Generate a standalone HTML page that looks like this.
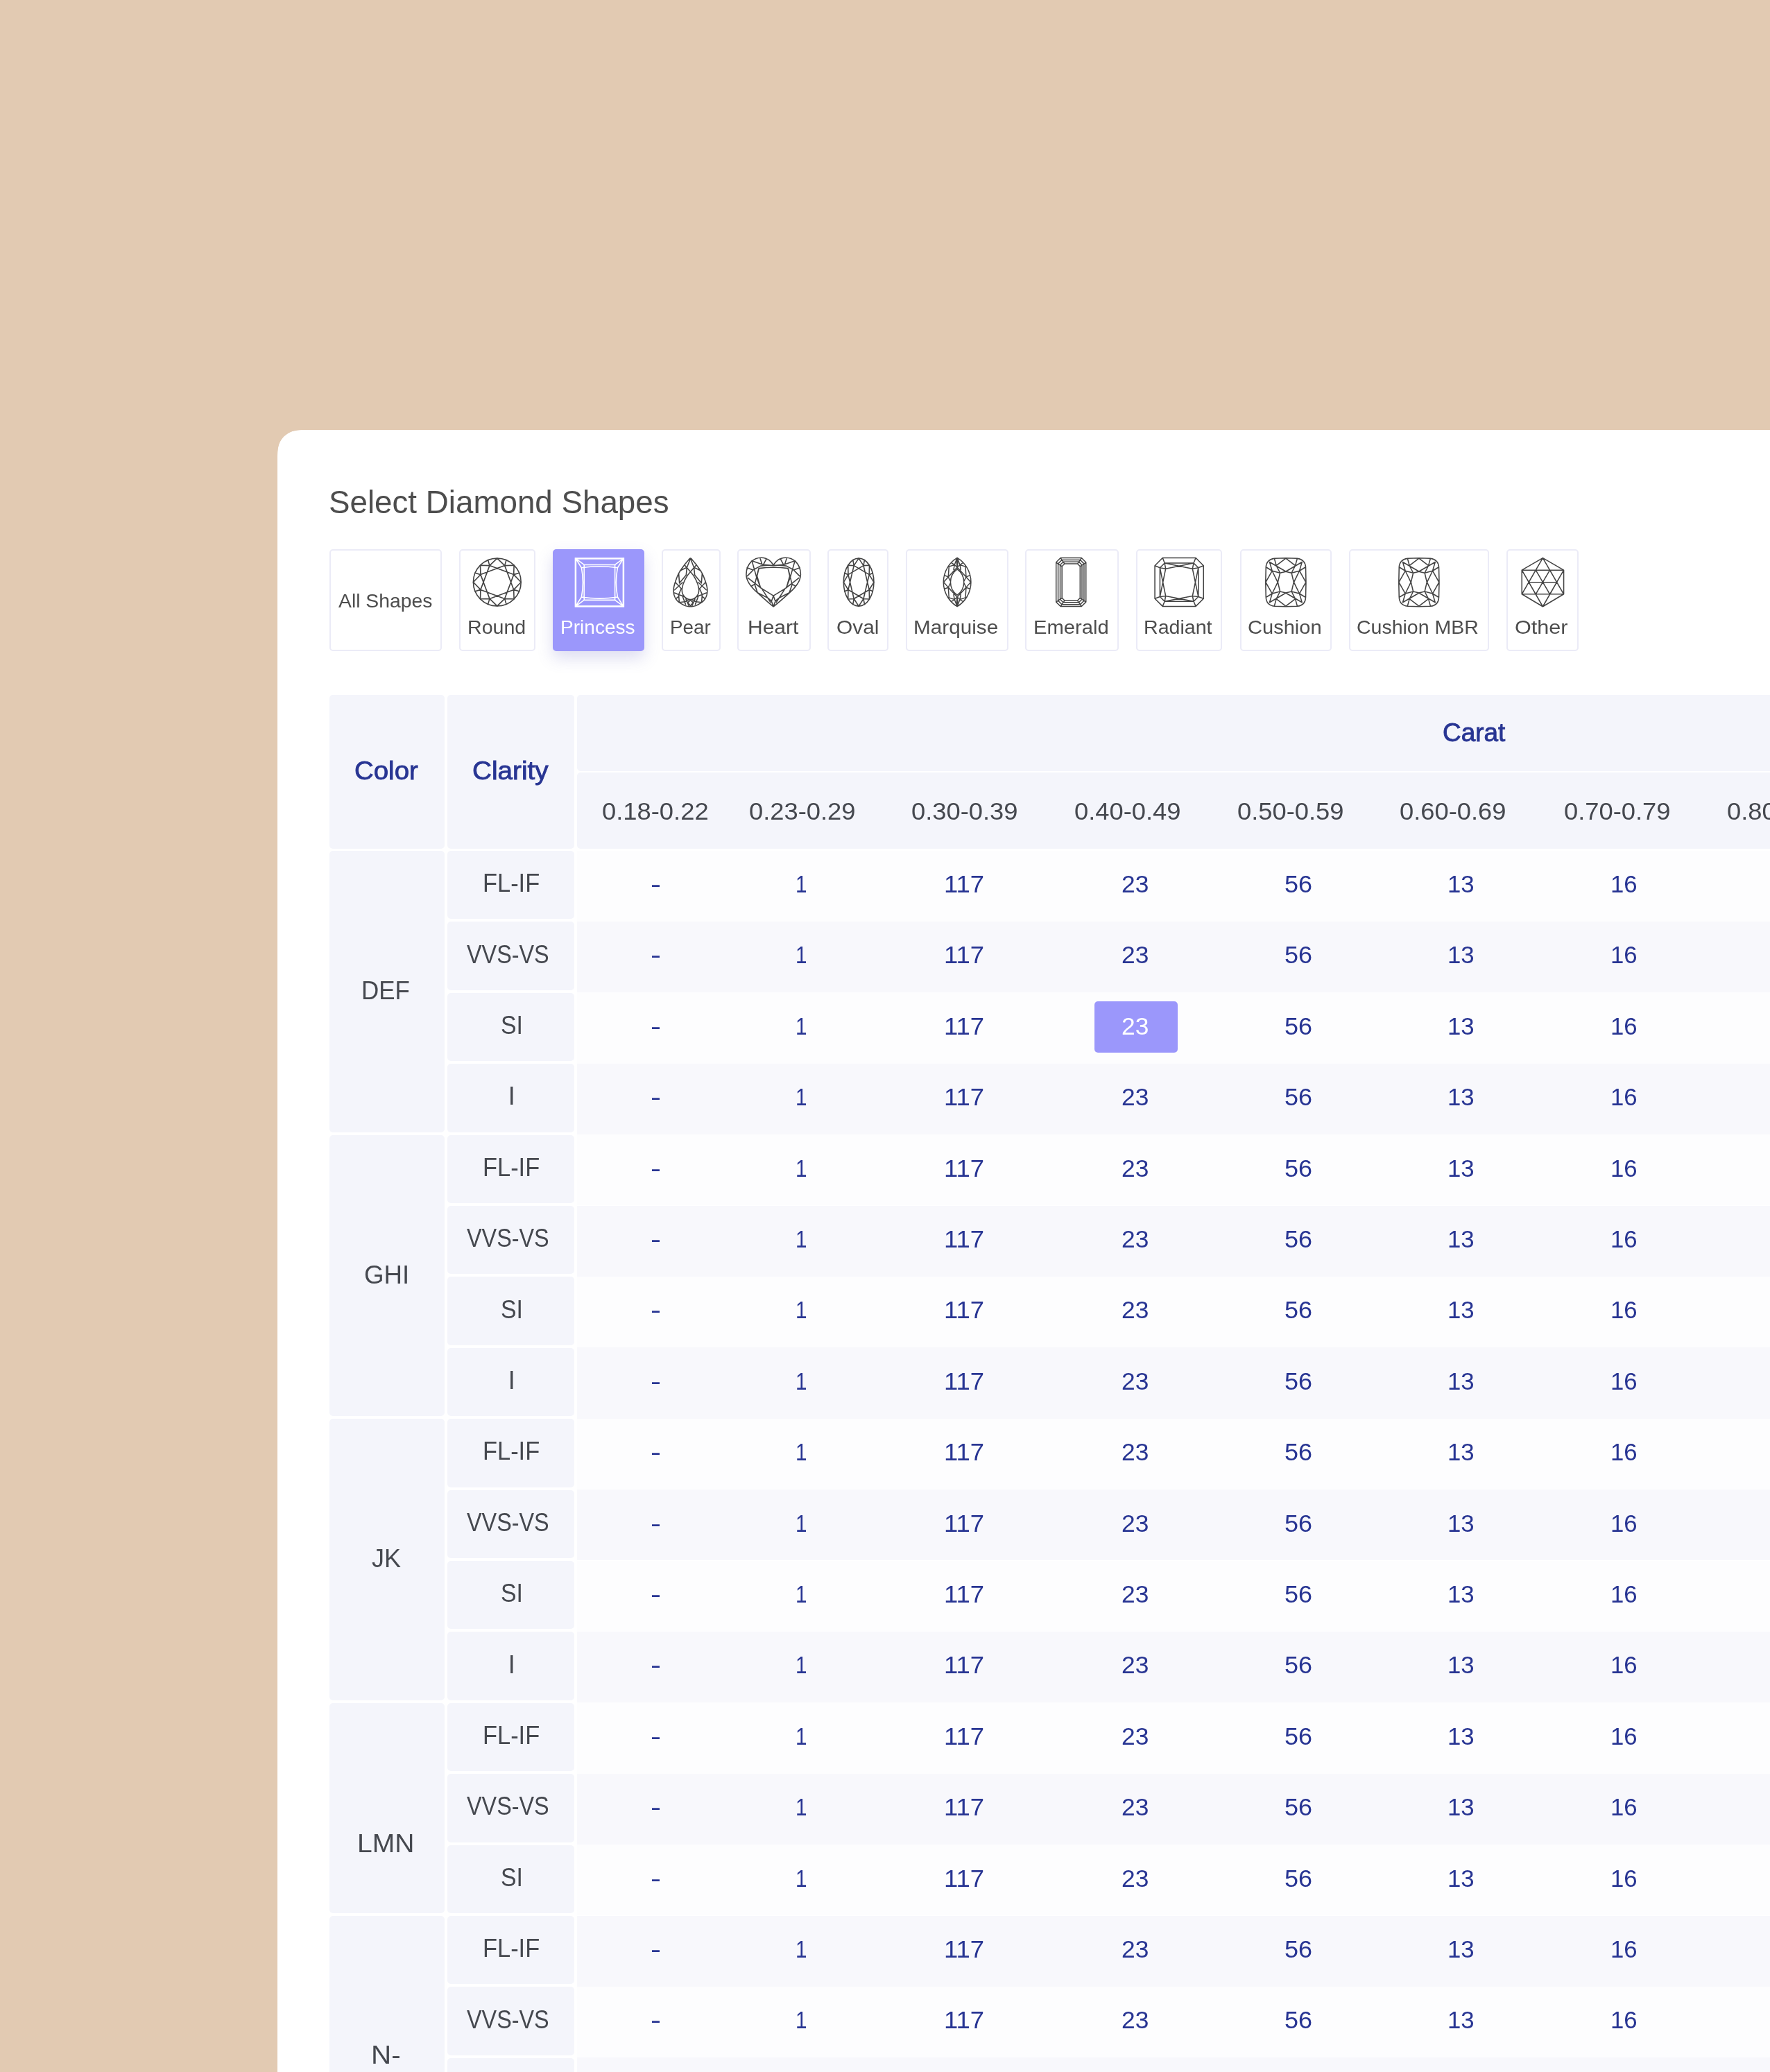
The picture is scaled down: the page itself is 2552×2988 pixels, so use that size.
<!DOCTYPE html>
<html lang="en">
<head>
<meta charset="utf-8">
<title>Select Diamond Shapes</title>
<style>
html,body{margin:0;padding:0}
body{width:2552px;height:2988px;overflow:hidden;position:relative;background:#e2cab2;font-family:"Liberation Sans",sans-serif}
.page{position:absolute;left:0;top:0;width:2552px;height:2988px;overflow:hidden;will-change:transform}
.card{position:absolute;left:400px;top:620px;width:2300px;height:2500px;background:#fff;border-top-left-radius:32px}
.t{position:absolute;display:block;margin:0;white-space:nowrap;line-height:1;font-weight:400;transform-origin:0 0}
.ttl{font-size:47px;color:#4d4d4d}
.lbl{font-size:27.5px;color:#4d4d4d}
.hb{font-size:36.5px;color:#283593;-webkit-text-stroke:.85px #283593}
.rng{font-size:35px;color:#45484f}
.k{font-size:36px;color:#45484f}
.v{font-size:35px;color:#283593}
.btn{position:absolute;box-sizing:border-box;border:2px solid #ebebf7;border-radius:5px;background:#fff}
.btn.sel{background:#9b97fb;border-color:#9b97fb;box-shadow:0 10px 22px rgba(100,100,190,.22)}
.btn.sel .lbl,.pick .v{color:#fff}
.ic{position:absolute;overflow:visible;fill:none;stroke:#444;stroke-linecap:round;stroke-linejoin:round}
.ic.w{stroke:#fff}
.c{position:absolute}
.h{background:#f4f5fb;border-radius:5px}
.row{background:#fdfdfe}
.row.alt{background:#f8f8fc}
.pick{position:absolute;display:block;background:#9b97fb;border-radius:5px}
</style>
</head>
<body>
<div class="page">
<main class="card" style="clip-path:path('M0,48.92C0,34.83 0,27.79 2.4,20.21C5.41,11.93 11.93,5.41 20.21,2.4L21.44,2.1C27.79,0 34.83,0 48.92,0L2300,0L2300,2500L0,2500Z')">
  <h2 class="t ttl" style="left:74.12px;top:79.61px;transform:scaleX(0.9728)">Select Diamond Shapes</h2>
  <div class="shapes" role="group" aria-label="Diamond shapes">
    <div class="btn" role="button" style="left:74.7px;top:172px;width:162.3px;height:147px;">
      <span class="t lbl" style="left:11.54px;top:59.22px;transform:scaleX(1.0304)">All Shapes</span>
    </div>
    <div class="btn" role="button" style="left:262.3px;top:172px;width:109.4px;height:147px;">
      <svg class="ic" style="left:-4.3px;top:-4px" width="120" height="100" viewBox="0 0 120 100" stroke-width="1.6" aria-hidden="true"><circle cx="56.8" cy="49.5" r="34.4"/><path d="M67.68,25.62L80.68,60.38M80.68,38.62L67.68,73.38M80.68,60.38L45.92,73.38M67.68,73.38L32.92,60.38M45.92,73.38L32.92,38.62M32.92,60.38L45.92,25.62M32.92,38.62L67.68,25.62M45.92,25.62L80.68,38.62M56.8,15.1L67.68,25.62M56.8,15.1L45.92,25.62M81.12,25.18L67.68,25.62M81.12,25.18L80.68,38.62M91.2,49.5L80.68,38.62M91.2,49.5L80.68,60.38M81.12,73.82L80.68,60.38M81.12,73.82L67.68,73.38M56.8,83.9L67.68,73.38M56.8,83.9L45.92,73.38M32.48,73.82L45.92,73.38M32.48,73.82L32.92,60.38M22.4,49.5L32.92,60.38M22.4,49.5L32.92,38.62M32.48,25.18L32.92,38.62M32.48,25.18L45.92,25.62M67.68,25.62L69.96,17.72M80.68,38.62L88.58,36.34M80.68,60.38L88.58,62.66M67.68,73.38L69.96,81.28M45.92,73.38L43.64,81.28M32.92,60.38L25.02,62.66M32.92,38.62L25.02,36.34M45.92,25.62L43.64,17.72"/></svg>
      <span class="t lbl" style="left:10.06px;top:97.02px;transform:scaleX(1.0390)">Round</span>
    </div>
    <div class="btn sel" role="button" aria-pressed="true" style="left:397.3px;top:172px;width:131.7px;height:147px;">
      <svg class="ic w" style="left:-9.3px;top:-9px" width="150" height="110" viewBox="0 0 150 110" stroke-width="1.6" aria-hidden="true"><path d="M52.18,29.44L96.62,29.44L96.62,80.36L52.18,80.36ZM48.39,33.79Q74.4,29.65 100.41,33.79Q96.27,54.9 100.41,76.01Q74.4,80.15 48.39,76.01Q52.53,54.9 48.39,33.79ZM39.9,20.4L52.18,29.44M39.9,20.4L48.39,33.79M108.9,20.4L96.62,29.44M108.9,20.4L100.41,33.79M108.9,89.4L96.62,80.36M108.9,89.4L100.41,76.01M39.9,89.4L52.18,80.36M39.9,89.4L48.39,76.01"/><rect x="39.9" y="20.4" width="69" height="69" stroke-width="2.5" stroke-linejoin="miter"/></svg>
      <span class="t lbl" style="left:9.1px;top:97.02px;transform:scaleX(1.0205)">Princess</span>
    </div>
    <div class="btn" role="button" style="left:554.3px;top:172px;width:84.3px;height:147px;">
      <svg class="ic" style="left:-6.3px;top:-4px" width="100" height="100" viewBox="0 0 1770 1770" stroke-width="28.32" aria-hidden="true"><path d="M805,268L793.51,270.97L782.22,279L770.94,290.75L759.44,304.89L747.53,320.08L735,335L721.64,350.24L707.59,367L693.12,384.81L678.52,403.22L664.05,421.77L650,440L636.26,457.99L622.59,476.11L609.06,494.38L595.74,512.78L582.7,531.32L570,550L557.56,568.76L545.3,587.59L533.31,606.56L521.7,625.74L510.57,645.2L500,665L490,685.43L480.48,706.48L471.44,727.81L462.85,749.07L454.71,769.92L447,790L439.79,809.32L433.11,828.15L426.88,846.56L421,864.63L415.4,882.42L410,900L404.7,917.42L399.56,934.63L394.69,951.56L390.22,968.15L386.28,984.32L383,1000L380.36,1014.8L378.26,1028.7L376.69,1042.19L375.63,1055.74L375.07,1069.85L375,1085L375.22,1101.28L375.7,1118.33L376.69,1135.94L378.41,1153.89L381.1,1171.98L385,1190L390.24,1208.45L396.67,1227.59L404.06,1246.88L412.22,1265.74L420.94,1283.63L430,1300L439.44,1314.73L449.44,1328.26L460,1340.81L471.11,1352.63L482.78,1363.95L495,1375L507.72,1385.62L520.93,1395.59L534.69,1405.06L549.07,1414.19L564.16,1423.11L580,1432L596.83,1441.11L614.63,1450.37L633.12,1459.44L652.04,1467.96L671.09,1475.6L690,1482L708.88,1487.27L727.96,1491.7L747.19,1495.25L766.48,1497.85L785.78,1499.45L805,1500L824.22,1499.45L843.52,1497.85L862.81,1495.25L882.04,1491.7L901.12,1487.27L920,1482L938.91,1475.6L957.96,1467.96L976.88,1459.44L995.37,1450.37L1013.17,1441.11L1030,1432L1045.84,1423.11L1060.93,1414.19L1075.31,1405.06L1089.07,1395.59L1102.28,1385.62L1115,1375L1127.22,1363.95L1138.89,1352.63L1150,1340.81L1160.56,1328.26L1170.56,1314.73L1180,1300L1189.06,1283.63L1197.78,1265.74L1205.94,1246.88L1213.33,1227.59L1219.76,1208.45L1225,1190L1228.9,1171.98L1231.59,1153.89L1233.31,1135.94L1234.3,1118.33L1234.78,1101.28L1235,1085L1234.93,1069.85L1234.37,1055.74L1233.31,1042.19L1231.74,1028.7L1229.64,1014.8L1227,1000L1223.72,984.32L1219.78,968.15L1215.31,951.56L1210.44,934.63L1205.3,917.42L1200,900L1194.6,882.42L1189,864.63L1183.12,846.56L1176.89,828.15L1170.21,809.32L1163,790L1155.29,769.92L1147.15,749.07L1138.56,727.81L1129.52,706.48L1120,685.43L1110,665L1099.43,645.2L1088.3,625.74L1076.69,606.56L1064.7,587.59L1052.44,568.76L1040,550L1027.3,531.32L1014.26,512.78L1000.94,494.38L987.41,476.11L973.74,457.99L960,440L945.95,421.77L931.48,403.22L916.88,384.81L902.41,367L888.36,350.24L875,335L862.47,320.08L850.56,304.89L839.06,290.75L827.78,279L816.49,270.97ZM805,610C720,700 610,880 590,1050C575,1200 680,1320 805,1320C930,1320 1035,1200 1020,1050C1000,880 890,700 805,610ZM805,275L715,500L695,700M805,275L895,500L915,700M650,432L805,610M960,432L805,610M540,585L715,500M1070,585L895,500M505,650L525,900M1105,650L1085,900M525,900L700,690M1085,900L910,690M420,880L570,1040M1190,880L1040,1040M600,885L400,1075M1010,885L1210,1075M400,1150L520,1200L640,1245M1210,1150L1090,1200L970,1245M570,1040L505,1195M1040,1040L1105,1195M505,1195L520,1395M1105,1195L1090,1395M440,1295L505,1240M1170,1295L1105,1240M600,1225L680,1440M1010,1225L930,1440M520,1395L660,1375L745,1345M1090,1395L950,1375L865,1345M690,1310L760,1470M920,1310L850,1470M805,1335L735,1400L805,1480M805,1335L875,1400L805,1480"/></svg>
      <span class="t lbl" style="left:9.72px;top:97.02px;transform:scaleX(1.0111)">Pear</span>
    </div>
    <div class="btn" role="button" style="left:663.3px;top:172px;width:105.4px;height:147px;">
      <svg class="ic" style="left:-5.3px;top:-4px" width="120" height="100" viewBox="0 0 1770 1475" stroke-width="23.6" aria-hidden="true"><path d="M813,365C760,290 700,215 560,210C400,205 240,330 235,560C232,680 330,830 480,960C600,1070 720,1180 813,1250C906,1180 1030,1070 1150,960C1300,830 1395,680 1392,560C1388,330 1230,205 1070,210C930,215 866,290 813,365ZM505,437Q813,395 1122,437L1160,600L1090,850L813,1020L540,850L465,600ZM380,472L540,385Q813,352 1088,385L1248,472M355,275L600,360M1271,275L1026,360M355,275L450,610L540,850M1271,275L1176,610L1086,850M500,440L415,780L475,955M1126,440L1211,780L1151,955M530,222L570,345M1096,222L1056,345M660,240L600,355M966,240L1026,355M600,360L813,378M1026,360L813,378M252,425L380,472M1374,425L1246,472M258,600L380,475M1368,600L1246,475M270,640L540,848M1356,640L1086,848M350,812L415,775M1276,812L1211,775M475,955L700,1070L772,1135M1151,955L926,1070L854,1135M560,862L752,1160M1066,862L874,1160M813,1020L772,1135L813,1250M813,1020L854,1135L813,1250"/></svg>
      <span class="t lbl" style="left:12.24px;top:97.02px;transform:scaleX(1.0912)">Heart</span>
    </div>
    <div class="btn" role="button" style="left:793.3px;top:172px;width:87.7px;height:147px;">
      <svg class="ic" style="left:-5.3px;top:-4px" width="100" height="100" viewBox="0 0 100 100" stroke-width="1.6" aria-hidden="true"><ellipse cx="48.1" cy="49.6" rx="21.8" ry="34.5"/><path d="M55,25.65L63.24,60.52M63.24,38.68L55,73.55M63.24,60.52L41.2,73.55M55,73.55L32.96,60.52M41.2,73.55L32.96,38.68M32.96,60.52L41.2,25.65M32.96,38.68L55,25.65M41.2,25.65L63.24,38.68M48.1,15.1L55,25.65M48.1,15.1L41.2,25.65M63.51,25.2L55,25.65M63.51,25.2L63.24,38.68M69.9,49.6L63.24,38.68M69.9,49.6L63.24,60.52M63.51,74L63.24,60.52M63.51,74L55,73.55M48.1,84.1L55,73.55M48.1,84.1L41.2,73.55M32.69,74L41.2,73.55M32.69,74L32.96,60.52M26.3,49.6L32.96,60.52M26.3,49.6L32.96,38.68M32.69,25.2L32.96,38.68M32.69,25.2L41.2,25.65M55,25.65L56.44,17.73M63.24,38.68L68.24,36.4M63.24,60.52L68.24,62.8M55,73.55L56.44,81.47M41.2,73.55L39.76,81.47M32.96,60.52L27.96,62.8M32.96,38.68L27.96,36.4M41.2,25.65L39.76,17.73"/></svg>
      <span class="t lbl" style="left:10.28px;top:97.02px;transform:scaleX(1.0860)">Oval</span>
    </div>
    <div class="btn" role="button" style="left:905.7px;top:172px;width:148px;height:147px;">
      <svg class="ic" style="left:42.3px;top:1px" width="60" height="90" viewBox="0 0 1381 2072" stroke-width="34.53" aria-hidden="true"><path d="M693,215A947,947 0 0 1 693,1835A947,947 0 0 1 693,215ZM693,595A527,527 0 0 1 693,1455A527,527 0 0 1 693,595ZM693,222L603,450L575,610M693,1828L603,1600L575,1440M693,222L783,450L811,610M693,1828L783,1600L811,1440M420,510L603,450M420,1540L603,1600M966,510L783,450M966,1540L783,1600M420,510L397,850M420,1540L397,1200M966,510L989,850M966,1540L989,1200M244,1025L397,850L693,531L783,450L887,377M244,1025L397,1200L693,1519L783,1600L887,1673M1142,1025L989,850L693,531L603,450L499,377M1142,1025L989,1200L693,1519L603,1600L499,1673M397,850L270,800M397,1200L270,1250M989,850L1116,800M989,1200L1116,1250M693,222L677,388L693,520M693,1828L677,1662L693,1530M693,222L709,388L693,520M693,1828L709,1662L693,1530M397,850L462,985M397,1200L462,1065M989,850L924,985M989,1200L924,1065"/></svg>
      <span class="t lbl" style="left:9.16px;top:97.02px;transform:scaleX(1.0800)">Marquise</span>
    </div>
    <div class="btn" role="button" style="left:1078px;top:172px;width:134.7px;height:147px;">
      <svg class="ic" style="left:0px;top:-4px" width="120" height="100" viewBox="0 0 1770 1475" stroke-width="22.12" aria-hidden="true"><path d="M725,215L1170,215L1265,310L1265,1152L1170,1247L725,1247L630,1152L630,310ZM752,257L1143,257L1223,337L1223,1125L1143,1205L752,1205L672,1125L672,337ZM781,300L1114,300L1180,366L1180,1096L1114,1162L781,1162L715,1096L715,366ZM810,340L1085,340L1140,395L1140,1067L1085,1122L810,1122L755,1067L755,395ZM725,215L810,340M1170,215L1085,340M1265,310L1140,395M1265,1152L1140,1067M1170,1247L1085,1122M725,1247L810,1122M630,1152L755,1067M630,310L755,395"/></svg>
      <span class="t lbl" style="left:9.91px;top:97.02px;transform:scaleX(1.0613)">Emerald</span>
    </div>
    <div class="btn" role="button" style="left:1238.3px;top:172px;width:123.7px;height:147px;">
      <svg class="ic" style="left:-0.3px;top:-4px" width="120" height="100" viewBox="0 0 1770 1475" stroke-width="22.86" aria-hidden="true"><path d="M535,215L1240,215L1405,380L1405,1080L1240,1245L535,1245L370,1080L370,380ZM578,325L1195,325L1295,425L1295,1040L1195,1140L578,1140L478,1040L478,425ZM535,215L578,325L600,445M1240,215L1195,325L1170,445M1405,380L1295,425L1170,445M1405,1080L1295,1040L1170,1025M1240,1245L1195,1140L1170,1025M535,1245L578,1140L600,1025M370,1080L478,1040L600,1025M370,380L478,425L600,445M578,325L1170,445M1195,325L600,445M1295,425L1170,1025M1295,1040L1170,445M1195,1140L600,1025M578,1140L1170,1025M478,1040L600,445M478,425L600,1025"/></svg>
      <span class="t lbl" style="left:9.06px;top:97.02px;transform:scaleX(1.0397)">Radiant</span>
    </div>
    <div class="btn" role="button" style="left:1387.7px;top:172px;width:132.3px;height:147px;">
      <svg class="ic" style="left:0.3px;top:-4px" width="120" height="100" viewBox="0 0 1770 1475" stroke-width="22.86" aria-hidden="true"><path d="M700,225Q942,210 1185,225Q1360,250 1365,420Q1378,732 1365,1045Q1360,1225 1185,1243Q942,1255 700,1243Q525,1225 520,1045Q507,732 520,420Q525,250 700,225ZM942,222L740,378M942,1242L740,1086M942,222L1144,378M942,1242L1144,1086M597,302L945,505M597,1162L945,959M1287,302L939,505M1287,1162L939,959M700,232L740,378L820,535M700,1232L740,1086L820,929M1184,232L1144,378L1064,535M1184,1232L1144,1086L1064,929M597,302L652,490M597,1162L652,974M1287,302L1232,490M1287,1162L1232,974M538,420L652,490L820,535M538,1044L652,974L820,929M1346,420L1232,490L1064,535M1346,1044L1232,974L1064,929M515,732L652,490M515,732L652,974M1369,732L1232,490M1369,732L1232,974M652,490L772,735M652,974L772,729M1232,490L1112,735M1232,974L1112,729M820,535L772,735M820,929L772,729M1064,535L1112,735M1064,929L1112,729M820,535L945,505M820,929L945,959M1064,535L939,505M1064,929L939,959"/></svg>
      <span class="t lbl" style="left:9.53px;top:97.02px;transform:scaleX(1.0569)">Cushion</span>
    </div>
    <div class="btn" role="button" style="left:1545px;top:172px;width:201.7px;height:147px;">
      <svg class="ic" style="left:35.22px;top:-4px" width="120" height="100" viewBox="0 0 1770 1475" stroke-width="22.86" aria-hidden="true"><path d="M700,225Q942,210 1185,225Q1360,250 1365,420Q1378,732 1365,1045Q1360,1225 1185,1243Q942,1255 700,1243Q525,1225 520,1045Q507,732 520,420Q525,250 700,225ZM942,222L740,378M942,1242L740,1086M942,222L1144,378M942,1242L1144,1086M597,302L945,505M597,1162L945,959M1287,302L939,505M1287,1162L939,959M700,232L740,378L820,535M700,1232L740,1086L820,929M1184,232L1144,378L1064,535M1184,1232L1144,1086L1064,929M597,302L652,490M597,1162L652,974M1287,302L1232,490M1287,1162L1232,974M538,420L652,490L820,535M538,1044L652,974L820,929M1346,420L1232,490L1064,535M1346,1044L1232,974L1064,929M515,732L652,490M515,732L652,974M1369,732L1232,490M1369,732L1232,974M652,490L772,735M652,974L772,729M1232,490L1112,735M1232,974L1112,729M820,535L772,735M820,929L772,729M1064,535L1112,735M1064,929L1112,729M820,535L945,505M820,929L945,959M1064,535L939,505M1064,929L939,959"/></svg>
      <span class="t lbl" style="left:9.26px;top:97.02px;transform:scaleX(1.0361)">Cushion MBR</span>
    </div>
    <div class="btn" role="button" style="left:1771.7px;top:172px;width:104.6px;height:147px;">
      <svg class="ic" style="left:-13.7px;top:-4px" width="120" height="100" viewBox="0 0 1770 1475" stroke-width="22.86" aria-hidden="true"><path d="M950,215L1395,475L1395,985L950,1250L505,985L505,475L950,215M505,475L1395,475M505,985L1395,985M655,735L1245,735M950,215L505,985M950,215L1395,985M950,1250L505,475M950,1250L1395,475M800,475L1100,985M1100,475L800,985M505,475L800,985M505,985L800,475M1395,475L1100,985M1395,985L1100,475"/></svg>
      <span class="t lbl" style="left:10.15px;top:97.02px;transform:scaleX(1.1116)">Other</span>
    </div>
  </div>
  <div class="grid" role="table" aria-label="Diamond counts by color, clarity and carat">
    <div class="c h" role="columnheader" style="left:75.4px;top:382px;width:166.1px;height:222px;">
      <span class="t hb" style="left:35.96px;top:92px;transform:scaleX(1.0522)">Color</span>
    </div>
    <div class="c h" role="columnheader" style="left:245.2px;top:382px;width:183.2px;height:222px;">
      <span class="t hb" style="left:35.64px;top:92px;transform:scaleX(1.0610)">Clarity</span>
    </div>
    <div class="c h" role="columnheader" style="left:432px;top:382px;width:1768px;height:110px;">
      <span class="t hb" style="left:1247.53px;top:36.6px;transform:scaleX(1.0121)">Carat</span>
    </div>
    <div class="c h" role="row" style="left:432px;top:494px;width:1768px;height:110px;">
      <span class="t rng" style="left:35.88px;top:37.87px;transform:scaleX(1.0388)">0.18-0.22</span>
      <span class="t rng" style="left:247.88px;top:37.87px;transform:scaleX(1.0381)">0.23-0.29</span>
      <span class="t rng" style="left:482.38px;top:37.87px;transform:scaleX(1.0381)">0.30-0.39</span>
      <span class="t rng" style="left:717.38px;top:37.87px;transform:scaleX(1.0381)">0.40-0.49</span>
      <span class="t rng" style="left:951.88px;top:37.87px;transform:scaleX(1.0381)">0.50-0.59</span>
      <span class="t rng" style="left:1186.18px;top:37.87px;transform:scaleX(1.0381)">0.60-0.69</span>
      <span class="t rng" style="left:1423.38px;top:37.87px;transform:scaleX(1.0381)">0.70-0.79</span>
      <span class="t rng" style="left:1658.38px;top:37.87px;transform:scaleX(1.0381)">0.80-0.89</span>
    </div>
    <div class="grp" role="rowgroup">
      <div class="c h" role="rowheader" style="left:75.4px;top:607px;width:166.1px;height:405.6px;">
        <span class="t k" style="left:45.94px;top:184.03px;transform:scaleX(0.9703)">DEF</span>
      </div>
      <div class="c h" role="rowheader" style="left:245.2px;top:607px;width:183.2px;height:98.4px;">
        <span class="t k" style="left:51.28px;top:29.13px;transform:scaleX(0.9557)">FL-IF</span>
      </div>
      <div class="c row" role="row" style="left:432px;top:606.5px;width:1768px;height:102.4px;">
        <span class="t v" style="left:105.99px;top:30.47px;transform:scaleX(1.2881)">-</span>
        <span class="t v" style="left:315.35px;top:30.47px;transform:scaleX(0.8475)">1</span>
        <span class="t v" style="left:529.18px;top:30.47px;transform:scaleX(1.0413)">117</span>
        <span class="t v" style="left:785.23px;top:30.47px;transform:scaleX(1.0099)">23</span>
        <span class="t v" style="left:1020.06px;top:30.47px;transform:scaleX(1.0278)">56</span>
        <span class="t v" style="left:1255.41px;top:30.47px;transform:scaleX(0.9932)">13</span>
        <span class="t v" style="left:1490.41px;top:30.47px;transform:scaleX(0.9932)">16</span>
      </div>
      <div class="c h" role="rowheader" style="left:245.2px;top:709.4px;width:183.2px;height:98.4px;">
        <span class="t k" style="left:27.35px;top:29.13px;transform:scaleX(0.8984)">VVS-VS</span>
      </div>
      <div class="c row alt" role="row" style="left:432px;top:708.9px;width:1768px;height:102.4px;">
        <span class="t v" style="left:105.99px;top:30.47px;transform:scaleX(1.2881)">-</span>
        <span class="t v" style="left:315.35px;top:30.47px;transform:scaleX(0.8475)">1</span>
        <span class="t v" style="left:529.18px;top:30.47px;transform:scaleX(1.0413)">117</span>
        <span class="t v" style="left:785.23px;top:30.47px;transform:scaleX(1.0099)">23</span>
        <span class="t v" style="left:1020.06px;top:30.47px;transform:scaleX(1.0278)">56</span>
        <span class="t v" style="left:1255.41px;top:30.47px;transform:scaleX(0.9932)">13</span>
        <span class="t v" style="left:1490.41px;top:30.47px;transform:scaleX(0.9932)">16</span>
      </div>
      <div class="c h" role="rowheader" style="left:245.2px;top:811.8px;width:183.2px;height:98.4px;">
        <span class="t k" style="left:76.91px;top:29.13px;transform:scaleX(0.9397)">SI</span>
      </div>
      <div class="c row" role="row" style="left:432px;top:811.3px;width:1768px;height:102.4px;">
        <span class="t v" style="left:105.99px;top:30.47px;transform:scaleX(1.2881)">-</span>
        <span class="t v" style="left:315.35px;top:30.47px;transform:scaleX(0.8475)">1</span>
        <span class="t v" style="left:529.18px;top:30.47px;transform:scaleX(1.0413)">117</span>
        <span class="pick" style="left:746px;top:12.7px;width:120px;height:74.5px;">
          <span class="t v" style="left:39.23px;top:17.77px;transform:scaleX(1.0099)">23</span>
        </span>
        <span class="t v" style="left:1020.06px;top:30.47px;transform:scaleX(1.0278)">56</span>
        <span class="t v" style="left:1255.41px;top:30.47px;transform:scaleX(0.9932)">13</span>
        <span class="t v" style="left:1490.41px;top:30.47px;transform:scaleX(0.9932)">16</span>
      </div>
      <div class="c h" role="rowheader" style="left:245.2px;top:914.2px;width:183.2px;height:98.4px;">
        <span class="t k" style="left:87.5px;top:29.13px;transform:scaleX(1.0000)">I</span>
      </div>
      <div class="c row alt" role="row" style="left:432px;top:913.7px;width:1768px;height:102.4px;">
        <span class="t v" style="left:105.99px;top:30.47px;transform:scaleX(1.2881)">-</span>
        <span class="t v" style="left:315.35px;top:30.47px;transform:scaleX(0.8475)">1</span>
        <span class="t v" style="left:529.18px;top:30.47px;transform:scaleX(1.0413)">117</span>
        <span class="t v" style="left:785.23px;top:30.47px;transform:scaleX(1.0099)">23</span>
        <span class="t v" style="left:1020.06px;top:30.47px;transform:scaleX(1.0278)">56</span>
        <span class="t v" style="left:1255.41px;top:30.47px;transform:scaleX(0.9932)">13</span>
        <span class="t v" style="left:1490.41px;top:30.47px;transform:scaleX(0.9932)">16</span>
      </div>
    </div>
    <div class="grp" role="rowgroup">
      <div class="c h" role="rowheader" style="left:75.4px;top:1016.6px;width:166.1px;height:405.6px;">
        <span class="t k" style="left:49.27px;top:184.03px;transform:scaleX(1.0191)">GHI</span>
      </div>
      <div class="c h" role="rowheader" style="left:245.2px;top:1016.6px;width:183.2px;height:98.4px;">
        <span class="t k" style="left:51.28px;top:29.13px;transform:scaleX(0.9557)">FL-IF</span>
      </div>
      <div class="c row" role="row" style="left:432px;top:1016.1px;width:1768px;height:102.4px;">
        <span class="t v" style="left:105.99px;top:30.47px;transform:scaleX(1.2881)">-</span>
        <span class="t v" style="left:315.35px;top:30.47px;transform:scaleX(0.8475)">1</span>
        <span class="t v" style="left:529.18px;top:30.47px;transform:scaleX(1.0413)">117</span>
        <span class="t v" style="left:785.23px;top:30.47px;transform:scaleX(1.0099)">23</span>
        <span class="t v" style="left:1020.06px;top:30.47px;transform:scaleX(1.0278)">56</span>
        <span class="t v" style="left:1255.41px;top:30.47px;transform:scaleX(0.9932)">13</span>
        <span class="t v" style="left:1490.41px;top:30.47px;transform:scaleX(0.9932)">16</span>
      </div>
      <div class="c h" role="rowheader" style="left:245.2px;top:1119px;width:183.2px;height:98.4px;">
        <span class="t k" style="left:27.35px;top:29.13px;transform:scaleX(0.8984)">VVS-VS</span>
      </div>
      <div class="c row alt" role="row" style="left:432px;top:1118.5px;width:1768px;height:102.4px;">
        <span class="t v" style="left:105.99px;top:30.47px;transform:scaleX(1.2881)">-</span>
        <span class="t v" style="left:315.35px;top:30.47px;transform:scaleX(0.8475)">1</span>
        <span class="t v" style="left:529.18px;top:30.47px;transform:scaleX(1.0413)">117</span>
        <span class="t v" style="left:785.23px;top:30.47px;transform:scaleX(1.0099)">23</span>
        <span class="t v" style="left:1020.06px;top:30.47px;transform:scaleX(1.0278)">56</span>
        <span class="t v" style="left:1255.41px;top:30.47px;transform:scaleX(0.9932)">13</span>
        <span class="t v" style="left:1490.41px;top:30.47px;transform:scaleX(0.9932)">16</span>
      </div>
      <div class="c h" role="rowheader" style="left:245.2px;top:1221.4px;width:183.2px;height:98.4px;">
        <span class="t k" style="left:76.91px;top:29.13px;transform:scaleX(0.9397)">SI</span>
      </div>
      <div class="c row" role="row" style="left:432px;top:1220.9px;width:1768px;height:102.4px;">
        <span class="t v" style="left:105.99px;top:30.47px;transform:scaleX(1.2881)">-</span>
        <span class="t v" style="left:315.35px;top:30.47px;transform:scaleX(0.8475)">1</span>
        <span class="t v" style="left:529.18px;top:30.47px;transform:scaleX(1.0413)">117</span>
        <span class="t v" style="left:785.23px;top:30.47px;transform:scaleX(1.0099)">23</span>
        <span class="t v" style="left:1020.06px;top:30.47px;transform:scaleX(1.0278)">56</span>
        <span class="t v" style="left:1255.41px;top:30.47px;transform:scaleX(0.9932)">13</span>
        <span class="t v" style="left:1490.41px;top:30.47px;transform:scaleX(0.9932)">16</span>
      </div>
      <div class="c h" role="rowheader" style="left:245.2px;top:1323.8px;width:183.2px;height:98.4px;">
        <span class="t k" style="left:87.5px;top:29.13px;transform:scaleX(1.0000)">I</span>
      </div>
      <div class="c row alt" role="row" style="left:432px;top:1323.3px;width:1768px;height:102.4px;">
        <span class="t v" style="left:105.99px;top:30.47px;transform:scaleX(1.2881)">-</span>
        <span class="t v" style="left:315.35px;top:30.47px;transform:scaleX(0.8475)">1</span>
        <span class="t v" style="left:529.18px;top:30.47px;transform:scaleX(1.0413)">117</span>
        <span class="t v" style="left:785.23px;top:30.47px;transform:scaleX(1.0099)">23</span>
        <span class="t v" style="left:1020.06px;top:30.47px;transform:scaleX(1.0278)">56</span>
        <span class="t v" style="left:1255.41px;top:30.47px;transform:scaleX(0.9932)">13</span>
        <span class="t v" style="left:1490.41px;top:30.47px;transform:scaleX(0.9932)">16</span>
      </div>
    </div>
    <div class="grp" role="rowgroup">
      <div class="c h" role="rowheader" style="left:75.4px;top:1426.2px;width:166.1px;height:405.6px;">
        <span class="t k" style="left:60.54px;top:184.03px;transform:scaleX(0.9990)">JK</span>
      </div>
      <div class="c h" role="rowheader" style="left:245.2px;top:1426.2px;width:183.2px;height:98.4px;">
        <span class="t k" style="left:51.28px;top:29.13px;transform:scaleX(0.9557)">FL-IF</span>
      </div>
      <div class="c row" role="row" style="left:432px;top:1425.7px;width:1768px;height:102.4px;">
        <span class="t v" style="left:105.99px;top:30.47px;transform:scaleX(1.2881)">-</span>
        <span class="t v" style="left:315.35px;top:30.47px;transform:scaleX(0.8475)">1</span>
        <span class="t v" style="left:529.18px;top:30.47px;transform:scaleX(1.0413)">117</span>
        <span class="t v" style="left:785.23px;top:30.47px;transform:scaleX(1.0099)">23</span>
        <span class="t v" style="left:1020.06px;top:30.47px;transform:scaleX(1.0278)">56</span>
        <span class="t v" style="left:1255.41px;top:30.47px;transform:scaleX(0.9932)">13</span>
        <span class="t v" style="left:1490.41px;top:30.47px;transform:scaleX(0.9932)">16</span>
      </div>
      <div class="c h" role="rowheader" style="left:245.2px;top:1528.6px;width:183.2px;height:98.4px;">
        <span class="t k" style="left:27.35px;top:29.13px;transform:scaleX(0.8984)">VVS-VS</span>
      </div>
      <div class="c row alt" role="row" style="left:432px;top:1528.1px;width:1768px;height:102.4px;">
        <span class="t v" style="left:105.99px;top:30.47px;transform:scaleX(1.2881)">-</span>
        <span class="t v" style="left:315.35px;top:30.47px;transform:scaleX(0.8475)">1</span>
        <span class="t v" style="left:529.18px;top:30.47px;transform:scaleX(1.0413)">117</span>
        <span class="t v" style="left:785.23px;top:30.47px;transform:scaleX(1.0099)">23</span>
        <span class="t v" style="left:1020.06px;top:30.47px;transform:scaleX(1.0278)">56</span>
        <span class="t v" style="left:1255.41px;top:30.47px;transform:scaleX(0.9932)">13</span>
        <span class="t v" style="left:1490.41px;top:30.47px;transform:scaleX(0.9932)">16</span>
      </div>
      <div class="c h" role="rowheader" style="left:245.2px;top:1631px;width:183.2px;height:98.4px;">
        <span class="t k" style="left:76.91px;top:29.13px;transform:scaleX(0.9397)">SI</span>
      </div>
      <div class="c row" role="row" style="left:432px;top:1630.5px;width:1768px;height:102.4px;">
        <span class="t v" style="left:105.99px;top:30.47px;transform:scaleX(1.2881)">-</span>
        <span class="t v" style="left:315.35px;top:30.47px;transform:scaleX(0.8475)">1</span>
        <span class="t v" style="left:529.18px;top:30.47px;transform:scaleX(1.0413)">117</span>
        <span class="t v" style="left:785.23px;top:30.47px;transform:scaleX(1.0099)">23</span>
        <span class="t v" style="left:1020.06px;top:30.47px;transform:scaleX(1.0278)">56</span>
        <span class="t v" style="left:1255.41px;top:30.47px;transform:scaleX(0.9932)">13</span>
        <span class="t v" style="left:1490.41px;top:30.47px;transform:scaleX(0.9932)">16</span>
      </div>
      <div class="c h" role="rowheader" style="left:245.2px;top:1733.4px;width:183.2px;height:98.4px;">
        <span class="t k" style="left:87.5px;top:29.13px;transform:scaleX(1.0000)">I</span>
      </div>
      <div class="c row alt" role="row" style="left:432px;top:1732.9px;width:1768px;height:102.4px;">
        <span class="t v" style="left:105.99px;top:30.47px;transform:scaleX(1.2881)">-</span>
        <span class="t v" style="left:315.35px;top:30.47px;transform:scaleX(0.8475)">1</span>
        <span class="t v" style="left:529.18px;top:30.47px;transform:scaleX(1.0413)">117</span>
        <span class="t v" style="left:785.23px;top:30.47px;transform:scaleX(1.0099)">23</span>
        <span class="t v" style="left:1020.06px;top:30.47px;transform:scaleX(1.0278)">56</span>
        <span class="t v" style="left:1255.41px;top:30.47px;transform:scaleX(0.9932)">13</span>
        <span class="t v" style="left:1490.41px;top:30.47px;transform:scaleX(0.9932)">16</span>
      </div>
    </div>
    <div class="grp" role="rowgroup">
      <div class="c h" role="rowheader" style="left:75.4px;top:1835.8px;width:166.1px;height:303.2px;">
        <span class="t k" style="left:39.9px;top:184.73px;transform:scaleX(1.0840)">LMN</span>
      </div>
      <div class="c h" role="rowheader" style="left:245.2px;top:1835.8px;width:183.2px;height:98.4px;">
        <span class="t k" style="left:51.28px;top:29.13px;transform:scaleX(0.9557)">FL-IF</span>
      </div>
      <div class="c row" role="row" style="left:432px;top:1835.3px;width:1768px;height:102.4px;">
        <span class="t v" style="left:105.99px;top:30.47px;transform:scaleX(1.2881)">-</span>
        <span class="t v" style="left:315.35px;top:30.47px;transform:scaleX(0.8475)">1</span>
        <span class="t v" style="left:529.18px;top:30.47px;transform:scaleX(1.0413)">117</span>
        <span class="t v" style="left:785.23px;top:30.47px;transform:scaleX(1.0099)">23</span>
        <span class="t v" style="left:1020.06px;top:30.47px;transform:scaleX(1.0278)">56</span>
        <span class="t v" style="left:1255.41px;top:30.47px;transform:scaleX(0.9932)">13</span>
        <span class="t v" style="left:1490.41px;top:30.47px;transform:scaleX(0.9932)">16</span>
      </div>
      <div class="c h" role="rowheader" style="left:245.2px;top:1938.2px;width:183.2px;height:98.4px;">
        <span class="t k" style="left:27.35px;top:29.13px;transform:scaleX(0.8984)">VVS-VS</span>
      </div>
      <div class="c row alt" role="row" style="left:432px;top:1937.7px;width:1768px;height:102.4px;">
        <span class="t v" style="left:105.99px;top:30.47px;transform:scaleX(1.2881)">-</span>
        <span class="t v" style="left:315.35px;top:30.47px;transform:scaleX(0.8475)">1</span>
        <span class="t v" style="left:529.18px;top:30.47px;transform:scaleX(1.0413)">117</span>
        <span class="t v" style="left:785.23px;top:30.47px;transform:scaleX(1.0099)">23</span>
        <span class="t v" style="left:1020.06px;top:30.47px;transform:scaleX(1.0278)">56</span>
        <span class="t v" style="left:1255.41px;top:30.47px;transform:scaleX(0.9932)">13</span>
        <span class="t v" style="left:1490.41px;top:30.47px;transform:scaleX(0.9932)">16</span>
      </div>
      <div class="c h" role="rowheader" style="left:245.2px;top:2040.6px;width:183.2px;height:98.4px;">
        <span class="t k" style="left:76.91px;top:29.13px;transform:scaleX(0.9397)">SI</span>
      </div>
      <div class="c row" role="row" style="left:432px;top:2040.1px;width:1768px;height:102.4px;">
        <span class="t v" style="left:105.99px;top:30.47px;transform:scaleX(1.2881)">-</span>
        <span class="t v" style="left:315.35px;top:30.47px;transform:scaleX(0.8475)">1</span>
        <span class="t v" style="left:529.18px;top:30.47px;transform:scaleX(1.0413)">117</span>
        <span class="t v" style="left:785.23px;top:30.47px;transform:scaleX(1.0099)">23</span>
        <span class="t v" style="left:1020.06px;top:30.47px;transform:scaleX(1.0278)">56</span>
        <span class="t v" style="left:1255.41px;top:30.47px;transform:scaleX(0.9932)">13</span>
        <span class="t v" style="left:1490.41px;top:30.47px;transform:scaleX(0.9932)">16</span>
      </div>
    </div>
    <div class="grp" role="rowgroup">
      <div class="c h" role="rowheader" style="left:75.4px;top:2143px;width:166.1px;height:405.6px;">
        <span class="t k" style="left:59.79px;top:182.83px;transform:scaleX(1.1219)">N-</span>
      </div>
      <div class="c h" role="rowheader" style="left:245.2px;top:2143px;width:183.2px;height:98.4px;">
        <span class="t k" style="left:51.28px;top:29.13px;transform:scaleX(0.9557)">FL-IF</span>
      </div>
      <div class="c row alt" role="row" style="left:432px;top:2142.5px;width:1768px;height:102.4px;">
        <span class="t v" style="left:105.99px;top:30.47px;transform:scaleX(1.2881)">-</span>
        <span class="t v" style="left:315.35px;top:30.47px;transform:scaleX(0.8475)">1</span>
        <span class="t v" style="left:529.18px;top:30.47px;transform:scaleX(1.0413)">117</span>
        <span class="t v" style="left:785.23px;top:30.47px;transform:scaleX(1.0099)">23</span>
        <span class="t v" style="left:1020.06px;top:30.47px;transform:scaleX(1.0278)">56</span>
        <span class="t v" style="left:1255.41px;top:30.47px;transform:scaleX(0.9932)">13</span>
        <span class="t v" style="left:1490.41px;top:30.47px;transform:scaleX(0.9932)">16</span>
      </div>
      <div class="c h" role="rowheader" style="left:245.2px;top:2245.4px;width:183.2px;height:98.4px;">
        <span class="t k" style="left:27.35px;top:29.13px;transform:scaleX(0.8984)">VVS-VS</span>
      </div>
      <div class="c row" role="row" style="left:432px;top:2244.9px;width:1768px;height:102.4px;">
        <span class="t v" style="left:105.99px;top:30.47px;transform:scaleX(1.2881)">-</span>
        <span class="t v" style="left:315.35px;top:30.47px;transform:scaleX(0.8475)">1</span>
        <span class="t v" style="left:529.18px;top:30.47px;transform:scaleX(1.0413)">117</span>
        <span class="t v" style="left:785.23px;top:30.47px;transform:scaleX(1.0099)">23</span>
        <span class="t v" style="left:1020.06px;top:30.47px;transform:scaleX(1.0278)">56</span>
        <span class="t v" style="left:1255.41px;top:30.47px;transform:scaleX(0.9932)">13</span>
        <span class="t v" style="left:1490.41px;top:30.47px;transform:scaleX(0.9932)">16</span>
      </div>
      <div class="c h" role="rowheader" style="left:245.2px;top:2347.8px;width:183.2px;height:98.4px;">
        <span class="t k" style="left:76.91px;top:29.13px;transform:scaleX(0.9397)">SI</span>
      </div>
      <div class="c row alt" role="row" style="left:432px;top:2347.3px;width:1768px;height:102.4px;">
        <span class="t v" style="left:105.99px;top:30.47px;transform:scaleX(1.2881)">-</span>
        <span class="t v" style="left:315.35px;top:30.47px;transform:scaleX(0.8475)">1</span>
        <span class="t v" style="left:529.18px;top:30.47px;transform:scaleX(1.0413)">117</span>
        <span class="t v" style="left:785.23px;top:30.47px;transform:scaleX(1.0099)">23</span>
        <span class="t v" style="left:1020.06px;top:30.47px;transform:scaleX(1.0278)">56</span>
        <span class="t v" style="left:1255.41px;top:30.47px;transform:scaleX(0.9932)">13</span>
        <span class="t v" style="left:1490.41px;top:30.47px;transform:scaleX(0.9932)">16</span>
      </div>
      <div class="c h" role="rowheader" style="left:245.2px;top:2450.2px;width:183.2px;height:98.4px;">
        <span class="t k" style="left:87.5px;top:29.13px;transform:scaleX(1.0000)">I</span>
      </div>
      <div class="c row" role="row" style="left:432px;top:2449.7px;width:1768px;height:102.4px;">
        <span class="t v" style="left:105.99px;top:30.47px;transform:scaleX(1.2881)">-</span>
        <span class="t v" style="left:315.35px;top:30.47px;transform:scaleX(0.8475)">1</span>
        <span class="t v" style="left:529.18px;top:30.47px;transform:scaleX(1.0413)">117</span>
        <span class="t v" style="left:785.23px;top:30.47px;transform:scaleX(1.0099)">23</span>
        <span class="t v" style="left:1020.06px;top:30.47px;transform:scaleX(1.0278)">56</span>
        <span class="t v" style="left:1255.41px;top:30.47px;transform:scaleX(0.9932)">13</span>
        <span class="t v" style="left:1490.41px;top:30.47px;transform:scaleX(0.9932)">16</span>
      </div>
    </div>
  </div>
</main>
</div>
</body>
</html>
